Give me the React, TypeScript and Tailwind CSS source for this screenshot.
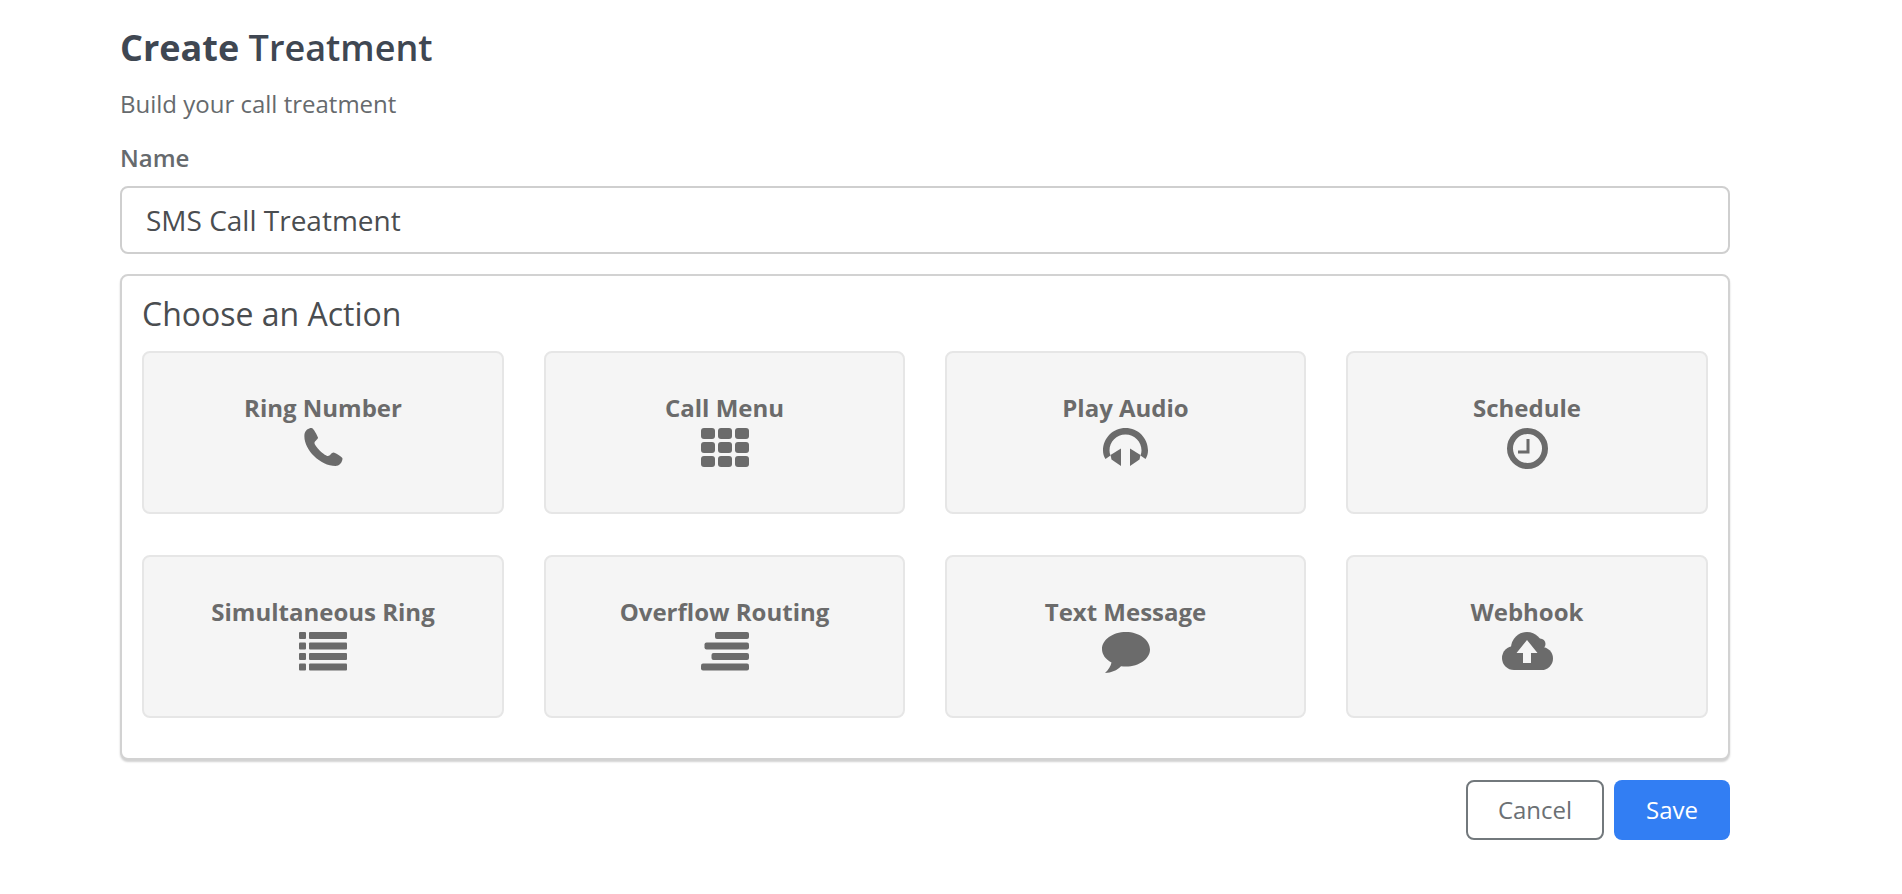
const PhoneIcon = () => (
  <svg width="39" height="38" viewBox="0 0 39 38" fill="currentColor">
    <path d="M7.5 0C4.5 0 1.2 2.2.5 6c-1 8 3.5 16 9.5 22 6 6 14 10 21.5 10 3.500 0 7-3.500 7-7.500 0-1.500-7.500-6-9-6-2 0-3.500 3.500-5.500 3.500-3.500 0-13.500-10-13.500-13 0-2 3.500-3.500 3.500-5.500C13.500 8 9.500 0 7.500 0Z" />
  </svg>
);

const GridIcon = () => (
  <svg width="48" height="39" viewBox="0 0 48 39" fill="currentColor">
    {[0, 17, 34].map((x) =>
      [0, 14, 28].map((y) => <rect key={`${x}-${y}`} x={x} y={y} width="14" height="11" rx="3" />),
    )}
  </svg>
);

const HeadphonesIcon = () => (
  <svg width="45" height="38" viewBox="0 0 45 38" fill="currentColor">
    <path d="M22.500 0C10 0 0 10 0 22.500c0 3 .8 6 2.500 8.500l5-3.500C6.800 26 6.500 24.300 6.500 22.500 6.500 13.500 13.500 6.500 22.500 6.500s16 7 16 16c0 1.800-.3 3.500-1 5l5 3.500c1.700-2.500 2.500-5.500 2.500-8.500C45 10 35 0 22.500 0Z" />
    <path d="M18 20.500V38l-9.500-6.500L7.500 27 18 20.500Z" />
    <path d="M27 20.500V38l9.500-6.500 1-4.500L27 20.500Z" />
  </svg>
);

const ClockIcon = () => (
  <svg width="41" height="41" viewBox="0 0 41 41" fill="none" stroke="currentColor">
    <circle cx="20.500" cy="20.500" r="17.500" strokeWidth="6" />
    <path d="M21 11v13h-10" strokeWidth="3" />
  </svg>
);

const ListIcon = () => (
  <svg width="48" height="39" viewBox="0 0 48 39" fill="currentColor">
    {[0, 10.500, 21, 31.500].map((y) => (
      <g key={y}>
        <rect x="0" y={y} width="7" height="7" rx="1" />
        <rect x="10" y={y} width="38" height="7" rx="1" />
      </g>
    ))}
  </svg>
);

const AlignRightIcon = () => (
  <svg width="48" height="39" viewBox="0 0 48 39" fill="currentColor">
    <rect x="14" y="0" width="34" height="7" rx="2" />
    <rect x="3.500" y="10.500" width="44.500" height="7" rx="2" />
    <rect x="10.500" y="21" width="37.500" height="7" rx="2" />
    <rect x="0" y="31.500" width="48" height="7" rx="2" />
  </svg>
);

const CommentIcon = () => (
  <svg width="48" height="41" viewBox="0 0 48 41" fill="currentColor">
    <path d="M24 0C10.700 0 0 7.600 0 17c0 5.500 3.500 10.400 9.500 13.500-.8 3.800-2.800 7-6.500 10.500 6.500-.5 12-2.500 16-6.800 1.600.2 3.300.3 5 .3 13.300 0 24-7.600 24-17S37.300 0 24 0Z" />
  </svg>
);

const CloudIcon = () => (
  <svg width="51" height="38" viewBox="0 0 51 38" fill="currentColor">
    <circle cx="25" cy="16" r="16" />
    <circle cx="38" cy="12" r="5.500" />
    <circle cx="12" cy="26" r="12" />
    <circle cx="39.500" cy="26.500" r="11.500" />
    <rect x="12" y="20" width="27" height="18" />
    <path d="M25 8 14.500 21H21v10h8V21h6.500L25 8Z" className="fill-[#f5f5f5]" />
  </svg>
);

const actions = [
  { label: "Ring Number", icon: <PhoneIcon /> },
  { label: "Call Menu", icon: <GridIcon /> },
  { label: "Play Audio", icon: <HeadphonesIcon /> },
  { label: "Schedule", icon: <ClockIcon /> },
  { label: "Simultaneous Ring", icon: <ListIcon /> },
  { label: "Overflow Routing", icon: <AlignRightIcon /> },
  { label: "Text Message", icon: <CommentIcon /> },
  { label: "Webhook", icon: <CloudIcon /> },
];

export default function App() {
  return (
    <div className="min-h-[894px] bg-white pl-[120px] pt-[24px] font-['Open_Sans',sans-serif] text-[#666a6d]">
      <div className="w-[1610px]">
        <h1 className="text-[36px] leading-[48px] font-semibold text-[#3f4752]">
          <span className="font-bold">Create</span> Treatment
        </h1>
        <p className="mt-[16px] text-[24px] leading-[32px]">Build your call treatment</p>
        <label className="mt-[22px] block text-[24px] leading-[32px] font-semibold">Name</label>

        <div className="mt-[12px] flex h-[68px] items-center rounded-[8px] border-2 border-[#cfcfcf] bg-white pl-[24px] text-[28px] text-[#4a4d50]">
          SMS Call Treatment
        </div>

        <div className="mt-[20px] h-[486px] rounded-[8px] border-2 border-[#d2d2d2] bg-white px-[20px] pt-[17px] shadow-[0_2px_2px_rgba(0,0,0,0.18)]">
          <h2 className="text-[32px] leading-[42px] text-[#4a4d50]">Choose an Action</h2>
          <div className="mt-[16px] grid grid-cols-[362px_361px_361px_362px] gap-x-[40px] gap-y-[41px]">
            {actions.map((action) => (
              <div
                key={action.label}
                className="flex h-[163px] flex-col items-center rounded-[8px] border-2 border-[#e6e6e6] bg-[#f5f5f5] pt-[39px] text-[#6b6b6b]"
              >
                <span className="text-[24px] leading-[32px] font-bold">{action.label}</span>
                <span className="mt-[4px] flex">{action.icon}</span>
              </div>
            ))}
          </div>
        </div>

        <div className="mt-[20px] flex justify-end gap-[10px]">
          <button className="h-[60px] w-[138px] rounded-[8px] border-2 border-[#72787c] bg-white text-[24px] text-[#6b7074]">
            Cancel
          </button>
          <button className="h-[60px] w-[116px] rounded-[8px] bg-[#327ef3] text-[24px] text-white">Save</button>
        </div>
      </div>
    </div>
  );
}
